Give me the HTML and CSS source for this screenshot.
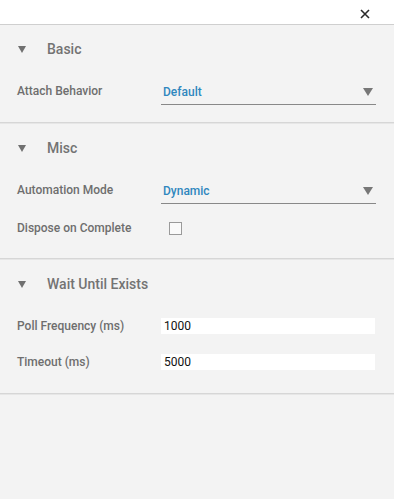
FILE: index.html
```html
<!DOCTYPE html>
<html lang="en">
<head>
    <meta charset="UTF-8">
    <meta name="viewport" content="width=device-width, initial-scale=1.0">
    <title>Properties</title>
    <link rel="stylesheet" href="styles.css">
</head>
<body>
    <div class="panel">
        <div class="topbar">
            <button class="close" title="Close">
                <svg width="10" height="10" viewBox="0 0 10 10"><path d="M1 1L9 9M9 1L1 9" stroke="#2b2b2b" stroke-width="1.6"/></svg>
            </button>
        </div>

        <div class="section first">
            <div class="section-head"><span class="caret"></span>Basic</div>
            <div class="row">
                <label>Attach Behavior</label>
                <div class="select"><span>Default</span><span class="arrow"></span></div>
            </div>
        </div>

        <div class="section misc">
            <div class="section-head"><span class="caret"></span>Misc</div>
            <div class="row">
                <label>Automation Mode</label>
                <div class="select"><span>Dynamic</span><span class="arrow"></span></div>
            </div>
            <div class="row tall">
                <label>Dispose on Complete</label>
                <div><span class="checkbox"></span></div>
            </div>
        </div>

        <div class="section">
            <div class="section-head"><span class="caret"></span>Wait Until Exists</div>
            <div class="row">
                <label>Poll Frequency (ms)</label>
                <input class="field" type="text" value="1000">
            </div>
            <div class="row">
                <label>Timeout (ms)</label>
                <input class="field" type="text" value="5000">
            </div>
        </div>
    </div>
</body>
</html>
```

FILE: styles.css
```css
body {
    margin: 0;
    background-color: #f3f3f3;
    font-family: Roboto, "Liberation Sans", sans-serif;
    height: 100vh;
}

.topbar {
    height: 24px;
    background-color: #fff;
    border-bottom: 1px solid #cfcfcf;
    display: flex;
    justify-content: flex-end;
    align-items: center;
    padding-right: 23px;
}

.close {
    border: none;
    background: none;
    padding: 0;
    width: 12px;
    height: 12px;
    display: flex;
    align-items: center;
    justify-content: center;
    margin-top: 4px;
}

.section {
    padding: 12px 18px 13px 17px;
    border-bottom: 1px solid #d6d6d6;
    box-shadow: 0 1px 0 #e6e6e6;
}

.section.first {
    padding-top: 11px;
}

.section.misc {
    padding-bottom: 12px;
}

.section-head {
    height: 26px;
    display: flex;
    align-items: center;
    font-size: 14px;
    font-weight: 500;
    color: #737373;
    margin-bottom: 11px;
}

.caret {
    width: 0;
    height: 0;
    border-left: 4px solid transparent;
    border-right: 4px solid transparent;
    border-top: 7px solid #707070;
    margin-left: 1px;
    margin-right: 21px;
}

.row {
    height: 36px;
    display: grid;
    grid-template-columns: 144px 1fr;
    align-items: center;
}

.row.tall {
    height: 38px;
    padding-top: 2px;
    box-sizing: border-box;
}

.row label {
    font-size: 12px;
    font-weight: 500;
    color: #6e6e6e;
}

.select {
    height: 24px;
    border-bottom: 1px solid #888;
    display: flex;
    justify-content: space-between;
    align-items: center;
    padding: 0 3px 0 2px;
    margin-top: 2px;
    font-size: 12px;
    font-weight: 500;
    color: #2f87be;
}

.arrow {
    width: 0;
    height: 0;
    border-left: 5px solid transparent;
    border-right: 5px solid transparent;
    border-top: 8px solid #777;
}

.checkbox {
    display: block;
    width: 11px;
    height: 11px;
    border: 1px solid #9a9a9a;
    background-color: #fafafa;
    margin-left: 8px;
}

.field {
    height: 16px;
    border: none;
    background-color: #fff;
    padding: 0 3px;
    margin-right: 1px;
    font-family: Roboto, "Liberation Sans", sans-serif;
    font-size: 12px;
    color: #111;
    outline: none;
}
```
